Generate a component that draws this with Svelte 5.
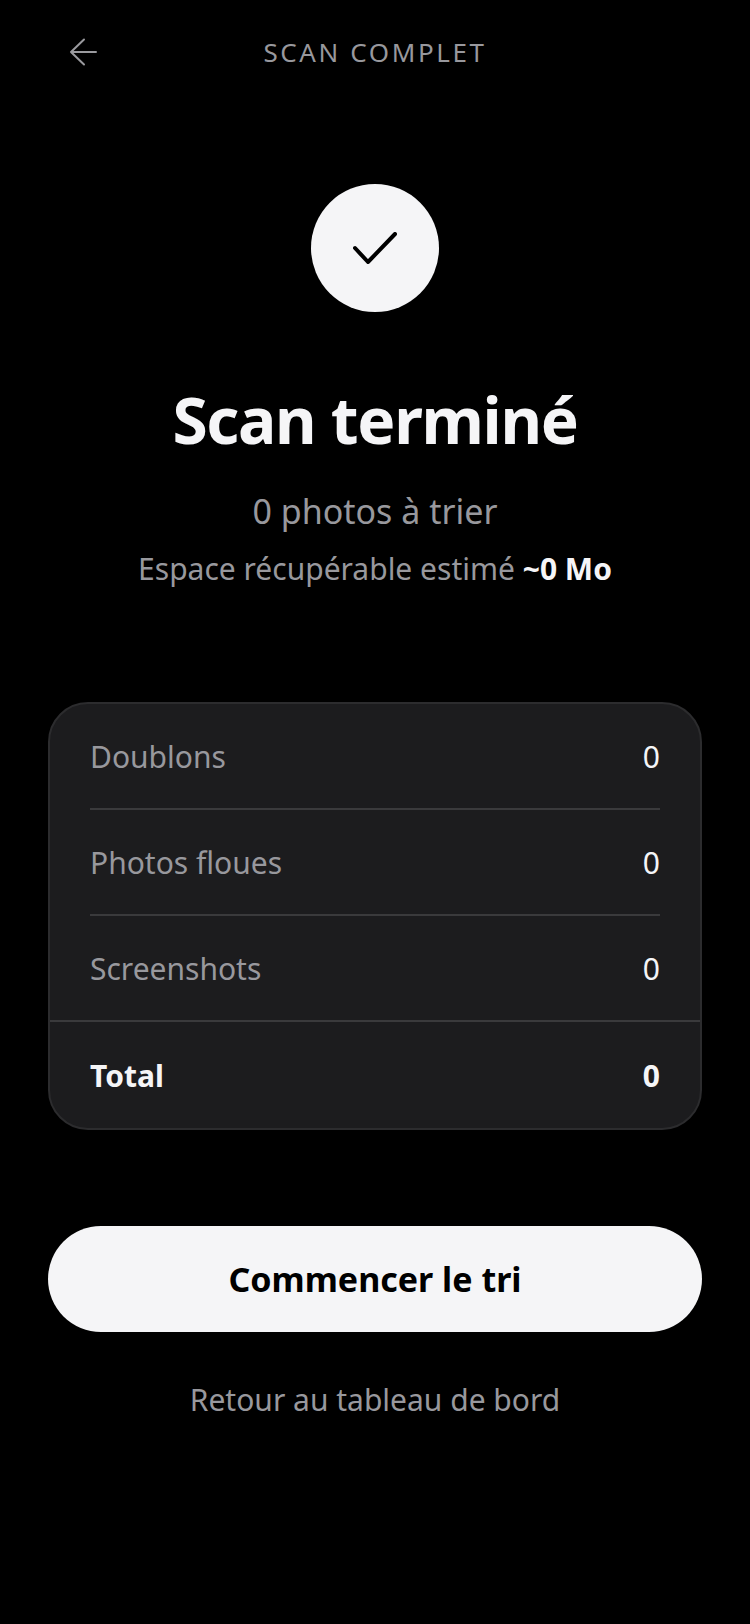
<script>
  const rows = [
    { label: 'Doublons', value: 0 },
    { label: 'Photos floues', value: 0 },
    { label: 'Screenshots', value: 0 }
  ];
</script>

<main class="page">
  <header class="top">
    <button class="back" aria-label="Retour">
      <svg width="32" height="32" viewBox="0 0 32 32" fill="none">
        <path d="M28 16H3M16 3.5 3 16l13 12.500" stroke="#9a9a9e" stroke-width="2" stroke-linecap="round" stroke-linejoin="round"/>
      </svg>
    </button>
    <span class="eyebrow">SCAN COMPLET</span>
  </header>

  <section class="hero">
    <div class="badge">
      <svg width="44" height="32" viewBox="0 0 44 32" fill="none">
        <path d="M2 16 15 30 42 2" stroke="#000" stroke-width="4" stroke-linecap="round" stroke-linejoin="round"/>
      </svg>
    </div>
    <h1>Scan terminé</h1>
    <p class="count">0 photos à trier</p>
    <p class="space">Espace récupérable estimé <strong>~0 Mo</strong></p>
  </section>

  <section class="card">
    {#each rows as row}
      <div class="row">
        <span class="label">{row.label}</span>
        <span class="value">{row.value}</span>
      </div>
    {/each}
    <div class="row total">
      <span>Total</span>
      <span>0</span>
    </div>
  </section>

  <button class="primary">Commencer le tri</button>
  <button class="link">Retour au tableau de bord</button>
</main>

<style>
  :global(body) { margin: 0; background: #000; }
  .page {
    min-height: 1624px;
    box-sizing: border-box;
    padding: 0 48px;
    background: #000;
    color: #f5f5f7;
    font-family: "Noto Sans", "Open Sans", sans-serif;
    display: flex;
    flex-direction: column;
    align-items: stretch;
  }
  button { font-family: inherit; border: 0; background: none; padding: 0; margin: 0; cursor: pointer; }
  .top { position: relative; height: 104px; display: flex; align-items: center; justify-content: center; }
  .back { position: absolute; left: 20px; top: 36px; width: 32px; height: 32px; }
  .back svg { display: block; }
  .eyebrow { font-size: 26px; letter-spacing: 2.6px; color: #98989d; line-height: 1; }
  .hero { display: flex; flex-direction: column; align-items: center; padding-top: 80px; }
  .badge { width: 128px; height: 128px; border-radius: 50%; background: #f5f5f7; display: flex; align-items: center; justify-content: center; }
  h1 { margin: 64px 0 0; font-size: 64px; line-height: 88px; font-weight: 700; letter-spacing: -1.3px; color: #f5f5f7; }
  .count { margin: 24px 0 0; font-size: 34px; line-height: 46px; color: #98989d; }
  .space { margin: 12px 0 0; font-size: 30px; line-height: 46px; color: #98989d; }
  .space strong { color: #f5f5f7; font-weight: 700; }
  .card { margin-top: 110px; background: #1c1c1e; border: 2px solid #2c2c2e; border-radius: 40px; box-sizing: border-box; display: flex; flex-direction: column; }
  .row { height: 106px; margin: 0 40px; box-sizing: border-box; display: flex; align-items: center; justify-content: space-between; font-size: 30px; border-bottom: 2px solid #3a3a3c; }
  .row:nth-child(3) { margin: 0; padding: 0 40px; }
  .row.total { border-bottom: 0; font-weight: 700; color: #f5f5f7; }
  .label { color: #98989d; }
  .value { color: #f5f5f7; }
  .primary { margin-top: 96px; height: 106px; border-radius: 53px; background: #f5f5f7; color: #000; font-size: 34px; font-weight: 700; }
  .link { margin-top: 38px; font-size: 30px; line-height: 60px; color: #98989d; }
</style>
